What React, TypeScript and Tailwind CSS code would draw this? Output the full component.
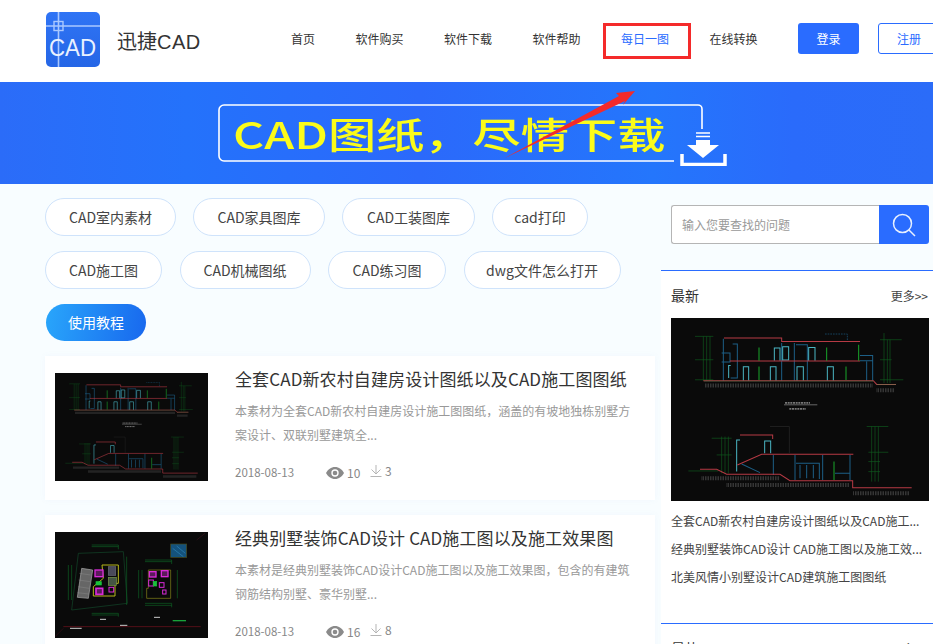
const FONT = "font-['Noto_Sans_CJK_SC','Noto_Sans',sans-serif]"

const navItems = ['首页', '软件购买', '软件下载', '软件帮助', '每日一图', '在线转换']
const tagRows = [
  {
    gap: 'gap-[17px]',
    tags: [
      { text: 'CAD室内素材', w: 'w-[131px]' },
      { text: 'CAD家具图库', w: 'w-[132px]' },
      { text: 'CAD工装图库', w: 'w-[133px]' },
      { text: 'cad打印', w: 'w-[96px]' },
    ],
  },
  {
    gap: 'gap-[17.500px]',
    tags: [
      { text: 'CAD施工图', w: 'w-[117px]' },
      { text: 'CAD机械图纸', w: 'w-[131px]' },
      { text: 'CAD练习图', w: 'w-[118px]' },
      { text: 'dwg文件怎么打开', w: 'w-[157px]' },
    ],
  },
]
const latest = [
  '全套CAD新农村自建房设计图纸以及CAD施工...',
  '经典别墅装饰CAD设计 CAD施工图以及施工效...',
  '北美风情小别墅设计CAD建筑施工图图纸',
]

const Logo = () => (
  <svg width="54" height="55" viewBox="0 0 54 55" className="shrink-0">
    <defs>
      <linearGradient id="logoBg" x1="0" y1="0" x2="0" y2="1">
        <stop offset="0" stopColor="#2f74f5" />
        <stop offset="1" stopColor="#2566e6" />
      </linearGradient>
    </defs>
    <rect width="54" height="55" rx="5" fill="url(#logoBg)" />
    <path d="M12.500 0V55M0 14H54" stroke="#a9c8ff" strokeWidth="1.600" />
    <rect x="8" y="9.500" width="9" height="9" fill="none" stroke="#a9c8ff" strokeWidth="1.400" />
    <text x="3" y="44" fontSize="23" fill="#eaf2ff" fontFamily="Liberation Sans, sans-serif" textLength="47" lengthAdjust="spacingAndGlyphs">
      CAD
    </text>
  </svg>
)

const Section = ({ className }: { className?: string }) => (
  <svg viewBox="33 10 774 548" className={className} preserveAspectRatio="none">
    <rect x="33" y="10" width="774" height="548" fill="#0a0a0a" />
    <g fill="none" strokeWidth="3">
      <g stroke="#0f5a1e" strokeWidth="2">
        <path d="M130 65V198M140 65V198M150 65V198M105 65H160M105 135H160M105 195H160" />
        <path d="M672 55V205M682 75V205M690 75V205M660 75H725M660 135H695M660 195H730" />
        <path d="M635 335V500M645 335V500M655 335V500M620 335H685M625 412H685M625 440H660M625 470H660" />
        <path d="M185 365V475M195 365V475M205 365V475M155 370H215M170 420H215M85 468H175" />
      </g>
      <g stroke="#1d5f86">
        <path d="M190 72V198M218 88H232V190H212M185 115H210V142H185" />
        <path d="M365 85V198M403 85V198M408 90H442V198M600 122H638V198M620 140V198M600 138H638" />
        <path d="M495 58H562V80" strokeDasharray="5 3" strokeWidth="2" />
        <path d="M405 420V495M408 445H478V492M420 450V490M440 450V490M460 450V490M488 420V495M570 420V495M340 420V480M525 475H570M245 447L300 473" />
      </g>
      <g stroke="#4bb6c4">
        <path d="M343 138V100H360V138M368 138V96H386V136H368M446 138V98H465V138" />
        <path d="M250 198V156H266V198M331 198V156H348V198M411 198V156H430V198M502 198V156H520V198" />
        <path d="M206 190V152H212M314 415V378H332V415M230 470V375H240" />
      </g>
      <path d="M192 70H365V80H600M210 139H600M130 198H640L650 209H708" stroke="#b63a44" />
      <path d="M240 360H338V372M232 450L305 418H580M120 463H170L200 478H360L390 497H578V518H755" stroke="#b63a44" />
      <path d="M297 98V138M297 155V196M500 98V138M558 155V196M596 90V138M522 440V495" stroke="#19a52a" />
      <path d="M132 199H640M650 209H708" stroke="#3f9a55" strokeWidth="1.200" />
      <path d="M330 335H388V415" stroke="#2b2b2b" strokeWidth="2" />
      <path d="M135 212H640M650 226H705M125 490H360M200 510H570M580 535H750" stroke="#777" strokeWidth="12" strokeDasharray="2 3" opacity="0.6" />
      <path d="M372 270H472" stroke="#999" strokeWidth="2" />
      <path d="M375 264H450M388 282H438" stroke="#777" strokeWidth="5" strokeDasharray="6 2" />
    </g>
  </svg>
)

const SitePlan = ({ className }: { className?: string }) => (
  <svg viewBox="45 36 459 318" className={className} preserveAspectRatio="none">
    <rect x="45" y="36" width="459" height="318" fill="#0a0a0a" />
    <g fill="none" strokeWidth="2">
      <path d="M45 350L70 325M470 60L495 40" stroke="#3a0f18" />
      <path d="M115 100L250 95L262 250L95 270Z" stroke="#12482a" />
      <path d="M155 75H235V88M155 80H235M155 280H235V290M155 285H235M85 135V240M95 135V240M260 110V255M315 120H395V132M315 125H395M315 250H395V262M315 256H395M296 150V235M306 150V235M412 150V235" stroke="#0e6124" />
      <path d="M125 145L158 150L145 235L112 232Z" fill="#666" stroke="#aaa" />
      <path d="M118 160L152 165M116 180L150 185M114 200L148 205M112 218L146 222" stroke="#999" strokeWidth="1" />
      <path d="M186 135H235V190H225V228H160V200L190 175Z" stroke="#b7b71a" strokeWidth="3" />
      <rect x="165" y="150" width="24" height="20" fill="#5a1a5a" stroke="#d82ad8" strokeWidth="4" />
      <rect x="168" y="205" width="20" height="18" fill="#5a1a5a" stroke="#d82ad8" strokeWidth="5" />
      <rect x="205" y="140" width="22" height="26" fill="#4a4a5a" stroke="#6b6b7a" />
      <rect x="205" y="172" width="24" height="24" fill="#445544" stroke="#7a9a4a" />
      <rect x="207" y="202" width="14" height="14" stroke="#d82ad8" strokeWidth="3" />
      <rect x="168" y="185" width="16" height="10" fill="#18c23a" stroke="#18c23a" />
      <path d="M320 205V235H392V150H325V205Z" stroke="#8a8a1a" />
      <rect x="328" y="155" width="20" height="16" fill="#5a1a5a" stroke="#d82ad8" strokeWidth="4" />
      <rect x="364" y="152" width="20" height="18" fill="#5a1a5a" stroke="#d82ad8" strokeWidth="4" />
      <rect x="326" y="180" width="14" height="18" stroke="#d82ad8" strokeWidth="3" />
      <rect x="358" y="188" width="14" height="14" stroke="#d82ad8" strokeWidth="3" />
      <rect x="368" y="210" width="10" height="12" stroke="#d82ad8" strokeWidth="3" />
      <rect x="340" y="184" width="10" height="14" fill="#18c23a" stroke="#18c23a" />
      <rect x="392" y="72" width="48" height="40" fill="#14527c" stroke="#4a4a1a" />
      <path d="M398 85L430 110M410 78L436 100" stroke="#2d86b8" />
      <path d="M70 320H482" stroke="#7a1220" />
      <path d="M90 325H125M240 316H262M180 298H198M342 292H360" stroke="#ccc" strokeWidth="3" />
      <path d="M398 302H438" stroke="#18a23a" strokeWidth="4" />
    </g>
  </svg>
)

const Eye = () => (
  <svg width="18" height="12" viewBox="0 0 18 12">
    <path d="M9 0C5 0 2 2.500 0 6c2 3.500 5 6 9 6s7-2.500 9-6c-2-3.500-5-6-9-6z" fill="#8a8a8a" />
    <circle cx="9" cy="6" r="3.700" fill="#fff" />
    <circle cx="9" cy="6" r="2.300" fill="#8a8a8a" />
  </svg>
)

const Down = () => (
  <svg width="12" height="12" viewBox="0 0 12 12" fill="none" stroke="#b5b5b5" strokeWidth="1">
    <path d="M6 0V8.500M1.500 4.500L6 9l4.500-4.500M0.500 11.500H11.500" />
  </svg>
)

interface CardProps {
  title: string
  lines: string[]
  views: number
  downs: number
  imageHeight: string
  children: React.ReactNode
}

const ArticleCard = ({ title, lines, views, downs, imageHeight, children }: CardProps) => (
  <div className="flex bg-white pl-[10px] pt-[17px] h-[144px] gap-[27px] w-[610px] shadow-[0_0_6px_rgba(120,160,220,0.06)]">
    <div className={`w-[153px] shrink-0 ${imageHeight}`}>{children}</div>
    <div className="flex flex-col w-[400px]">
      <h3 className="text-[17px] leading-[22px] -mt-[5px] tracking-[0.12px] text-[#333] font-normal whitespace-nowrap">{title}</h3>
      <p className="text-[12px] leading-[24px] text-[#999] mt-[9px] h-[48px]">
        {lines.map(l => (
          <span key={l} className="block whitespace-nowrap">{l}</span>
        ))}
      </p>
      <div className="flex items-center text-[12px] text-[#888] mt-[17px] h-[18px]">
        <span className="w-[91px] text-[11.500px]">2018-08-13</span>
        <Eye />
        <span className="ml-[3px] w-[23px]">{views}</span>
        <span className="flex items-center gap-[3px] -mt-[5px]">
          <Down />
          <span>{downs}</span>
        </span>
      </div>
    </div>
  </div>
)

const PanelHead = ({ title }: { title: string }) => (
  <div className="flex items-center justify-between pl-[10px] pr-[5px] pt-[2px] h-[47px]">
    <span className="text-[14px] text-[#333]">{title}</span>
    <span className="text-[12px] text-[#444]">更多&gt;&gt;</span>
  </div>
)

export default function App() {
  return (
    <div className={`${FONT} relative w-[933px] h-[644px] overflow-hidden bg-[#f8fdff]`}>
      <header className="flex items-center h-[82px] bg-white pl-[46px]">
        <div className="-mt-[3px]">
          <Logo />
        </div>
        <span className="ml-[17px] text-[20px] text-[#333] w-[174px] shrink-0 whitespace-nowrap">
          迅捷<span className="font-['Liberation_Sans',sans-serif] tracking-[0.5px]">CAD</span>
        </span>
        <nav className="flex items-center gap-[40.500px] shrink-0 text-[12px] text-[#333] -mt-[5px] whitespace-nowrap">
          {navItems.map(item => (
            <div key={item} className={item === '每日一图' ? 'relative text-[#2a6cff]' : ''}>
              {item}
              {item === '每日一图' && (
                <span className="absolute -left-[18px] -top-[7px] w-[88px] h-[36px] border-[3px] border-[#f42a2a]" />
              )}
            </div>
          ))}
        </nav>
        <button className="ml-[40.500px] w-[61px] h-[31px] rounded-[3px] bg-[#2a6cff] text-white text-[12px] shrink-0 -mt-[5px]">
          登录
        </button>
        <button className="ml-[19px] w-[62px] h-[31px] rounded-[3px] bg-white border border-[#2a6cff] text-[#2a6cff] text-[12px] shrink-0 -mt-[5px]">
          注册
        </button>
      </header>

      <section className="relative h-[102px] pl-[218px] pt-[22px] bg-[linear-gradient(90deg,#2b6cf8_0%,#2472fb_20%,#2b69fb_45%,#2476fc_70%,#2a6bfb_85%,#2b6cf8_100%)]">
        <div className="relative w-[485px] h-[58px] flex items-center">
          <svg width="510" height="62" viewBox="0 0 510 62" className="absolute left-0 top-0" fill="none">
            <path d="M456 57H6a5 5 0 0 1-5-5V6a5 5 0 0 1 5-5H480a4 4 0 0 1 4 4V25" stroke="#fff" strokeWidth="1.600" />
            <path d="M478 29H492M478 32.500H492" stroke="#fff" strokeWidth="1.500" />
            <path d="M478 36H492V41H501L485 54L469 41H478Z" fill="#fff" />
            <path d="M464 50V60.500H507V50" stroke="#fff" strokeWidth="3.500" />
          </svg>
          <span className="ml-[15px] text-[36px] font-medium leading-none text-[#fbfb1a] whitespace-nowrap origin-left scale-x-[1.34]">
            CAD图纸，尽情下载
          </span>
        </div>
        <svg width="140" height="80" viewBox="0 0 140 80" className="absolute left-[500px] top-[4px]">
          <path d="M5 72L119 10L116 7L135 5L123 19L125 15Z" fill="#f42a2a" />
        </svg>
      </section>

      <main className="flex">
        <div className="w-[661px] pl-[45px] pt-[14px]">
          <div className="flex flex-col gap-[15px]">
            {tagRows.map(row => (
              <div key={row.tags[0].text} className={`flex ${row.gap}`}>
                {row.tags.map(tag => (
                  <span key={tag.text} className={`${tag.w} h-[38px] flex items-center justify-center rounded-full bg-white border border-[#cfe3fb] text-[14px] text-[#444] whitespace-nowrap`}>
                    {tag.text}
                  </span>
                ))}
              </div>
            ))}
          </div>
          <button className="mt-[15px] ml-[1px] w-[100px] h-[37px] rounded-full text-white text-[14px] bg-[linear-gradient(100deg,#29a6fb,#1868ee)]">
            使用教程
          </button>
          <div className="flex flex-col gap-[15px] mt-[15px]">
            <ArticleCard
              title="全套CAD新农村自建房设计图纸以及CAD施工图图纸"
              lines={['本素材为全套CAD新农村自建房设计施工图图纸，涵盖的有坡地独栋别墅方', '案设计、双联别墅建筑全...']}
              views={10}
              downs={3}
              imageHeight="h-[108px]"
            >
              <Section className="w-full h-full blur-[0.4px]" />
            </ArticleCard>
            <ArticleCard
              title="经典别墅装饰CAD设计 CAD施工图以及施工效果图"
              lines={['本素材是经典别墅装饰CAD设计CAD施工图以及施工效果图，包含的有建筑', '钢筋结构别墅、豪华别墅...']}
              views={16}
              downs={8}
              imageHeight="h-[106px]"
            >
              <SitePlan className="w-full h-full blur-[0.4px]" />
            </ArticleCard>
          </div>
        </div>

        <aside className="w-[272px]">
          <div className="flex mt-[21px] ml-[10px] w-[258px] h-[39px]">
            <div className="flex-1 flex items-center pl-[10px] bg-white border border-[#b5b5b5] border-r-0 rounded-l-[3px] text-[12px] text-[#999]">
              输入您要查找的问题
            </div>
            <div className="w-[50px] flex items-center justify-center bg-[#2a6cff] rounded-r-[3px]">
              <svg width="24" height="24" viewBox="0 0 24 24" fill="none" stroke="#e8f0ff" strokeWidth="1.500">
                <circle cx="10.500" cy="10.500" r="9" />
                <path d="M17 17L23 23" />
              </svg>
            </div>
          </div>
          <div className="mt-[26px] h-[353px] bg-white border-t border-[#2a6cff]">
            <PanelHead title="最新" />
            <div className="ml-[10px] w-[258px] h-[183px]">
              <Section className="w-full h-full blur-[0.4px]" />
            </div>
            <ul className="mt-[6px] ml-[10px] w-[258px] text-[12px] text-[#444]">
              {latest.map(t => (
                <li key={t} className="h-[28px] leading-[28px] whitespace-nowrap">{t}</li>
              ))}
            </ul>
          </div>
          <div className="bg-white border-t border-[#2a6cff] h-[40px] mt-0">
            <PanelHead title="最热" />
          </div>
        </aside>
      </main>
    </div>
  )
}
